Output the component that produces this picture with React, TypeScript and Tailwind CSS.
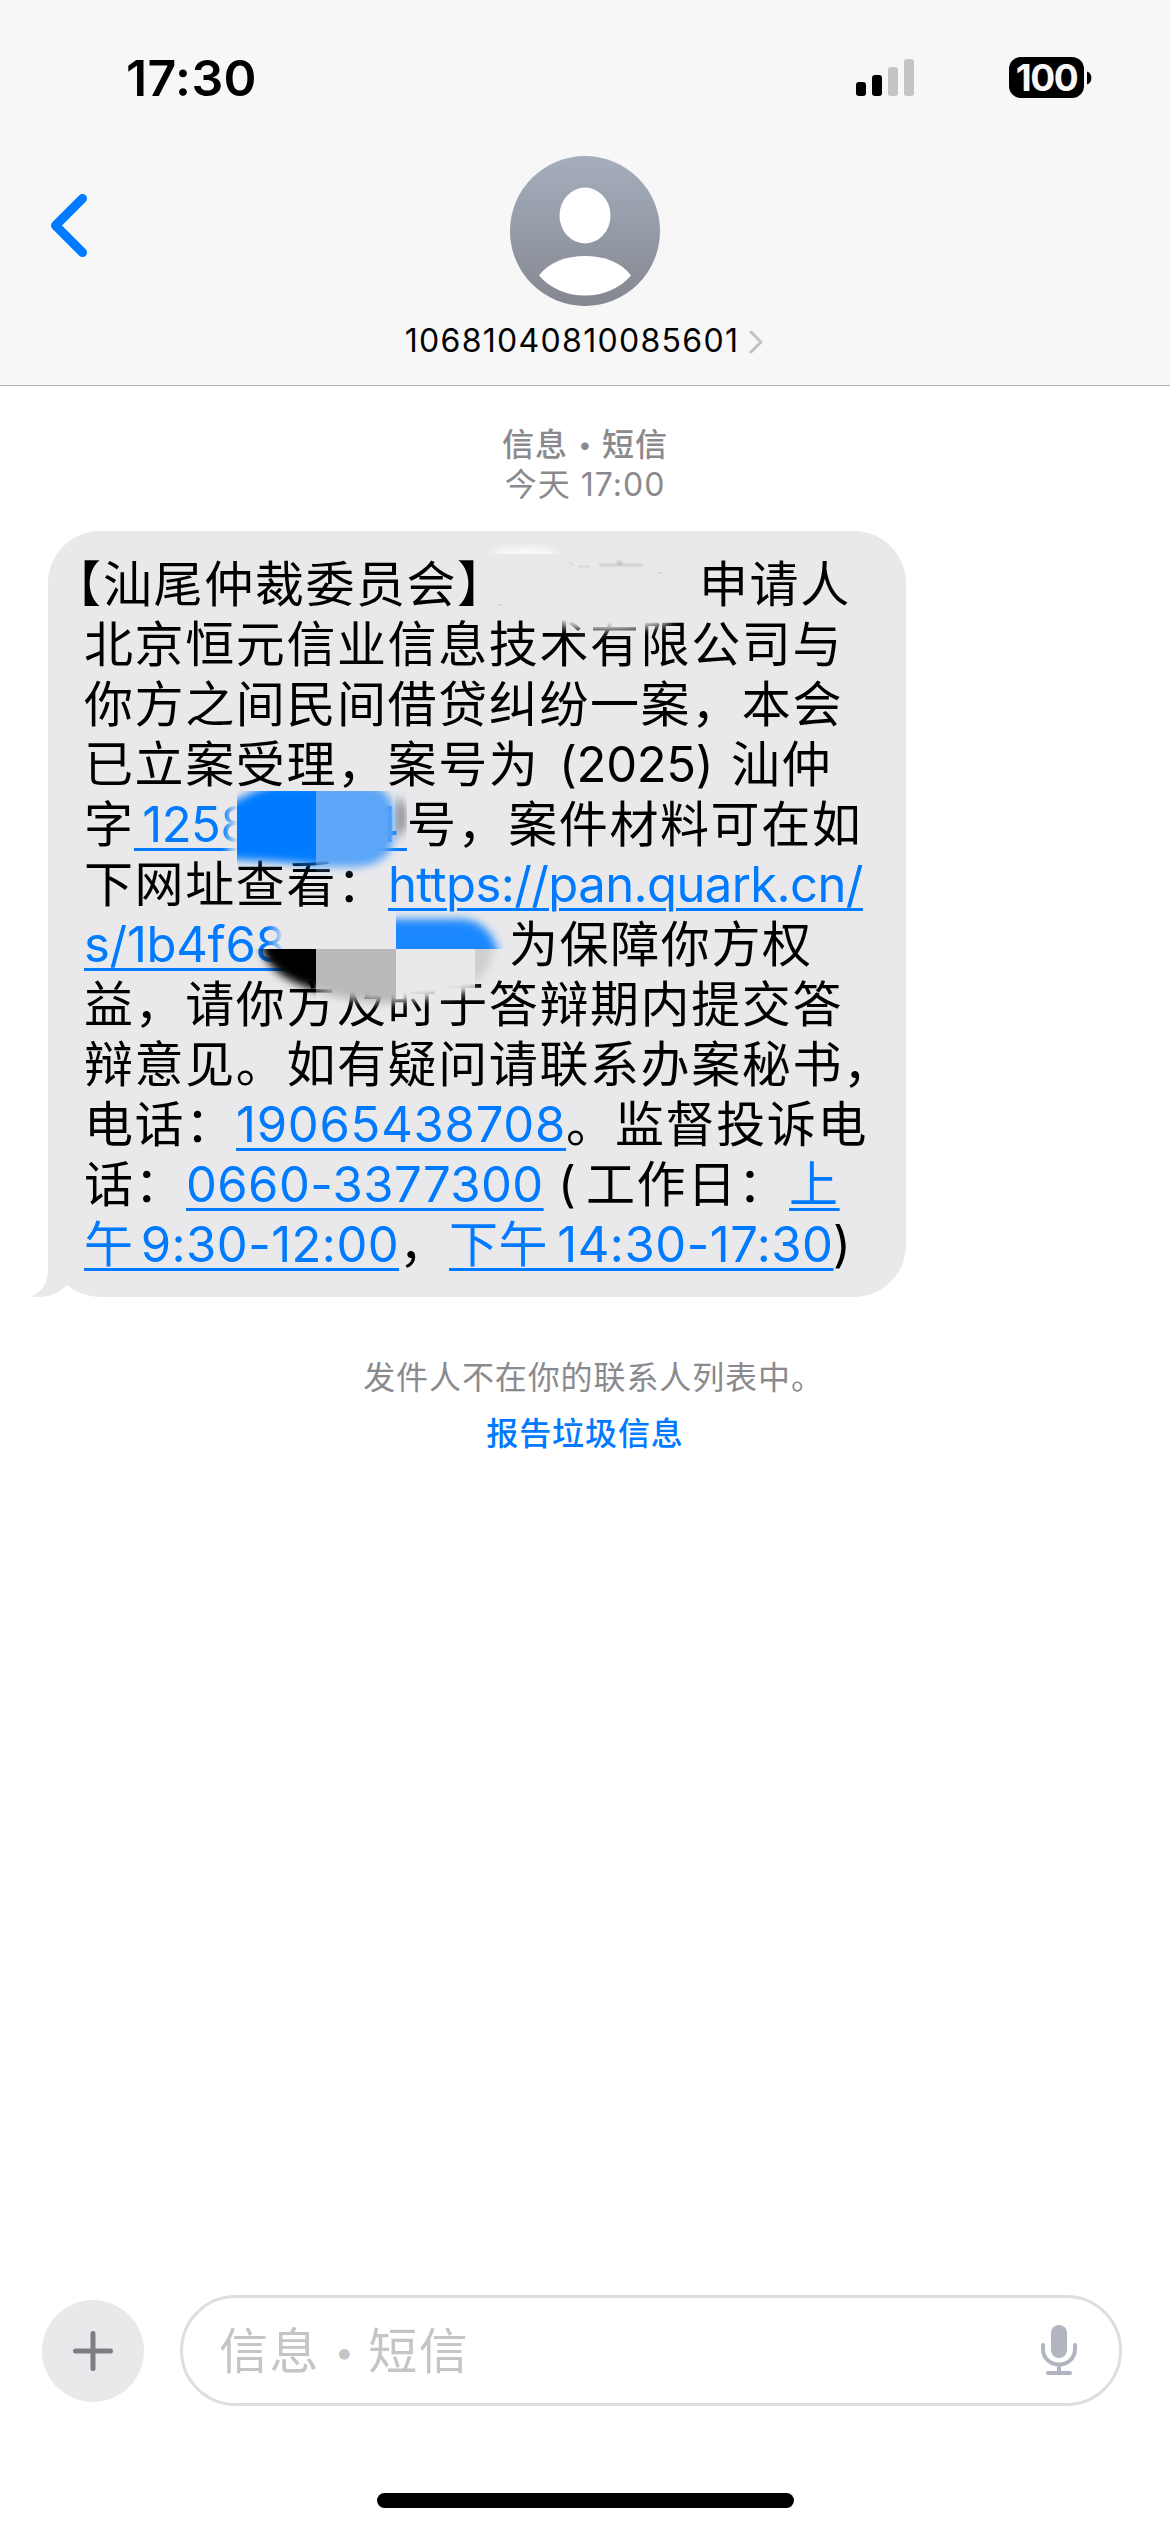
import type { ReactNode } from "react";

/* One row of the message; every run inside has its own advance. */
function Line({ children }: { children: ReactNode }) {
  return <div className="flex h-[60px] whitespace-pre leading-[60px]">{children}</div>;
}

function Cjk({ children, className = "" }: { children: ReactNode; className?: string }) {
  return <span className={`shrink-0 tracking-[1.6px] ${className}`}>{children}</span>;
}

function Link({ children, className = "" }: { children: ReactNode; className?: string }) {
  return (
    <a
      className={`shrink-0 text-[#007aff] underline decoration-[3px] underline-offset-[6px] ${className}`}
    >
      {children}
    </a>
  );
}

function StatusBar() {
  return (
    <div className="flex h-[156px] items-start justify-between pl-[126px] pr-[78px] pt-[47px]">
      <div className="text-[50px] font-semibold leading-[62px] tracking-[0.4px] text-black">17:30</div>
      <div className="flex items-start pt-[10px]">
        <svg className="mr-[95px] mt-[2px]" width="58" height="37" viewBox="0 0 58 37">
          <rect x="0" y="23" width="10" height="14" rx="3" fill="#000" />
          <rect x="16" y="16" width="10" height="21" rx="3" fill="#000" />
          <rect x="32" y="8" width="10" height="29" rx="3" fill="#c5c5c5" />
          <rect x="48" y="0" width="10" height="37" rx="3" fill="#c5c5c5" />
        </svg>
        <div className="flex h-[41px] w-[75px] items-center justify-center rounded-[12px] bg-black text-[37px] font-bold leading-[41px] tracking-[-1.500px] text-[#f7f7f7]">
          100
        </div>
        <svg className="ml-[3px] mt-[14px]" width="5" height="14" viewBox="0 0 5 14">
          <path d="M0 0.5C3 1.5 4.4 4 4.4 7S3 12.500 0 13.500Z" fill="#000" />
        </svg>
      </div>
    </div>
  );
}

function Header() {
  return (
    <header className="h-[386px] border-b border-[#b2b2b2] bg-[#f7f7f7]">
      <StatusBar />
      <div className="grid grid-cols-[1fr_auto_1fr]">
        <svg className="ml-[50px] mt-[37px]" width="38" height="66" viewBox="0 0 38 66">
          <path d="M32.500 5.500L5.500 32.500L32.500 59.500" fill="none" stroke="#007aff" strokeWidth="9" strokeLinecap="round" strokeLinejoin="round" />
        </svg>
        <svg width="150" height="150" viewBox="0 0 150 150">
          <defs>
            <linearGradient id="avatar" x1="0" y1="0" x2="0" y2="1">
              <stop offset="0" stopColor="#a6aebd" />
              <stop offset="1" stopColor="#838790" />
            </linearGradient>
          </defs>
          <circle cx="75" cy="75" r="75" fill="url(#avatar)" />
          <ellipse cx="75" cy="59.500" rx="25.500" ry="28" fill="#fff" />
          <path d="M29 119.500C39 106 56 100 75 100S111 106 121 119.500C110 132 94 139.500 75 139.500S40 132 29 119.500Z" fill="#fff" />
        </svg>
        <div />
      </div>
      <div className="flex items-center justify-center pt-[15px]">
        <span className="ml-[-1px] text-[32px] leading-[40px] tracking-[1.300px] text-black">10681040810085601</span>
        <svg className="ml-[9px] mt-[2px]" width="16" height="24" viewBox="0 0 16 24">
          <path d="M3 2L13 12L3 22" fill="none" stroke="#c2c2c4" strokeWidth="3" strokeLinecap="round" strokeLinejoin="round" />
        </svg>
      </div>
    </header>
  );
}

/* Brush strokes that hide the private parts of the message. */
function Redaction() {
  return (
    <svg className="absolute left-0 top-0" width="858" height="766" viewBox="48 531 858 766">
      <defs>
        <filter id="soft" x="-30%" y="-30%" width="160%" height="160%">
          <feGaussianBlur stdDeviation="4.500" />
        </filter>
        <filter id="faint" x="-30%" y="-30%" width="160%" height="160%">
          <feGaussianBlur stdDeviation="0.800" />
        </filter>
        <linearGradient id="fade" x1="0" y1="0" x2="1" y2="0">
          <stop offset="0" stopColor="#e9e9eb" stopOpacity="0" />
          <stop offset="1" stopColor="#e9e9eb" />
        </linearGradient>
        <clipPath id="c1"><rect x="237" y="791" width="79" height="90" /></clipPath>
        <clipPath id="c2"><rect x="316" y="791" width="100" height="90" /></clipPath>
        <clipPath id="c3"><rect x="396" y="900" width="120" height="49" /></clipPath>
        <clipPath id="c4"><rect x="240" y="949" width="76" height="60" /></clipPath>
        <clipPath id="c5"><rect x="316" y="949" width="80" height="80" /></clipPath>
        <clipPath id="c6"><rect x="396" y="949" width="79" height="80" /></clipPath>
        <clipPath id="c7"><rect x="475" y="949" width="60" height="50" /></clipPath>
        <clipPath id="c8"><rect x="480" y="540" width="100" height="14" /></clipPath>
      </defs>

      <path d="M545 600H670V623C640 631 590 633 560 625Z" fill="#e9e9eb" filter="url(#soft)" />
      <g clipPath="url(#c8)">
        <ellipse cx="525" cy="556" rx="32" ry="7" fill="#fff" filter="url(#soft)" />
      </g>
      <path d="M599 564H642V566H599ZM617 561H622V564H617Z" fill="#c4c4c6" filter="url(#faint)" />
      <path d="M569 562L573 565M578 566.500H590M498 605H503M657 573H662" fill="none" stroke="#dadadc" strokeWidth="2" />

      <rect x="222" y="795" width="16" height="58" fill="url(#fade)" />
      <g clipPath="url(#c1)">
        <path d="M225 806C240 799 252 790 275 785H340V868C300 862 260 861 225 859Z" fill="#007aff" filter="url(#soft)" />
      </g>
      <g clipPath="url(#c2)">
        <path d="M290 785H372C386 789 394 800 394 815V838C392 853 382 866 354 867H290Z" fill="#5ba5f7" filter="url(#soft)" />
      </g>
      <path d="M398 796C406 802 408 830 398 838Z" fill="#44484e" opacity="0.800" filter="url(#soft)" />

      <rect x="266" y="918" width="20" height="50" fill="url(#fade)" />
      <path d="M286 918H396V949H282Z" fill="#e9e9eb" filter="url(#soft)" />
      <g clipPath="url(#c3)">
        <path d="M370 919H460C480 919 496 933 500 960H370Z" fill="#1e88ff" filter="url(#soft)" />
      </g>
      <g clipPath="url(#c4)">
        <path d="M261 925H340V996C300 988 270 975 262 950Z" fill="#000" filter="url(#soft)" />
        <path d="M280 935H330V982C305 978 288 968 280 952Z" fill="#000" />
      </g>
      <g clipPath="url(#c5)">
        <path d="M290 930H420V1002C380 1005 340 1000 316 990H290Z" fill="#b9b9bb" filter="url(#soft)" />
      </g>
      <g clipPath="url(#c6)">
        <path d="M370 930H500V986C460 992 440 1000 370 1003Z" fill="#e9e9eb" filter="url(#soft)" />
      </g>
      <g clipPath="url(#c7)">
        <path d="M440 935H494C494 960 486 978 470 984H440Z" fill="#cfcfd1" filter="url(#soft)" />
      </g>
    </svg>
  );
}

function Message() {
  return (
    <div className="relative ml-[48px] mt-[26px] h-[766px] w-[858px] rounded-[52px] rounded-bl-none bg-[#e9e9eb] pl-[36px] pt-[24px] text-[49px] text-black">
      <svg className="absolute bottom-0 left-[-18px]" width="72" height="60" viewBox="0 0 72 60">
        <path d="M37 48C46 56 58 60 72 60H37Z" fill="#fff" />
        <path d="M1 59.500C15 61.500 28 57 37 48V60H1Z" fill="#fff" />
        <path d="M18 20V33C18 46 12 55 1 59.500C15 61.500 28 57 37 48Z" fill="#e9e9eb" />
      </svg>
      <div className="relative">
        <Line>
          <Cjk className="ml-[-32px] w-[51px]">【</Cjk>
          <Cjk className="w-[354px]">汕尾仲裁委员会</Cjk>
          <Cjk className="w-[242px]">】</Cjk>
          <Cjk>申请人</Cjk>
        </Line>
        <Line><Cjk>北京恒元信业信息技术有限公司与</Cjk></Line>
        <Line><Cjk>你方之间民间借贷纠纷一案，本会</Cjk></Line>
        <Line>
          <Cjk className="w-[473px]">已立案受理，案号为</Cjk>
          <span className="w-[174px] shrink-0 pl-[2px] tracking-[-0.300px]">(2025)</span>
          <Cjk>汕仲</Cjk>
        </Line>
        <Line>
          <Cjk className="w-[50px]">字</Cjk>
          <Link className="w-[180px] tracking-[-0.500px] [word-spacing:-5px]"> 1258</Link>
          <Link className="w-[93px] text-right tracking-[-0.500px] [word-spacing:-5px]">  4 </Link>
          <Cjk>号，案件材料可在如</Cjk>
        </Line>
        <Line>
          <Cjk className="w-[304px]">下网址查看：</Cjk>
          <Link className="tracking-[-0.600px]">https://pan.quark.cn/</Link>
        </Line>
        <Line>
          <Link className="w-[425px] tracking-[-0.300px]">s/1b4f68</Link>
          <Cjk>为保障你方权</Cjk>
        </Line>
        <Line><Cjk>益，请你方及时于答辩期内提交答</Cjk></Line>
        <Line><Cjk>辩意见。如有疑问请联系办案秘书，</Cjk></Line>
        <Line>
          <Cjk className="w-[152px]">电话：</Cjk>
          <Link className="w-[330px] tracking-[0.750px]">19065438708</Link>
          <Cjk className="w-[49px]">。</Cjk>
          <Cjk>监督投诉电</Cjk>
        </Line>
        <Line>
          <Cjk className="w-[102px]">话：</Cjk>
          <Link className="w-[357px] tracking-[0.400px]">0660-3377300</Link>
          <span className="w-[43px] shrink-0 pl-[15px]">(</span>
          <Cjk className="w-[203px]">工作日：</Cjk>
          <Link className="tracking-[1.600px] underline-offset-[4px]">上</Link>
        </Line>
        <Line>
          <Link className="w-[315px] tracking-[0.450px] [word-spacing:-7px]">午 9:30-12:00</Link>
          <Cjk className="w-[50px]">，</Cjk>
          <Link className="w-[384px] tracking-[0.500px] [word-spacing:-5px]">下午 14:30-17:30</Link>
          <span>)</span>
        </Line>
      </div>
      <Redaction />
    </div>
  );
}

function Composer() {
  return (
    <div className="flex items-center pl-[42px]">
      <div className="flex size-[102px] items-center justify-center rounded-full bg-[#e8e9eb]">
        <svg width="40" height="40" viewBox="0 0 40 40">
          <path d="M20 2.500V37.500M2.500 20H37.500" stroke="#7d7d83" strokeWidth="5" strokeLinecap="round" />
        </svg>
      </div>
      <div className="ml-[36px] flex h-[111px] w-[942px] items-center justify-between rounded-full border-[3px] border-[#dedede] pl-[36px] pr-[42px]">
        <div className="flex items-center pt-[2px] text-[49px] leading-[60px] tracking-[1.600px] text-[#c5c5c7]">
          <span>信息</span>
          <span className="w-[48px] text-center text-[34px] tracking-normal">•</span>
          <span>短信</span>
        </div>
        <svg width="36" height="51" viewBox="0 0 36 51">
          <rect x="10" y="0" width="16" height="33" rx="8" fill="#b0b5bf" />
          <path d="M2 20V24C2 33 9 39.500 18 39.500S34 33 34 24V20M18 40V47M7 48H29" fill="none" stroke="#b0b5bf" strokeWidth="4" strokeLinecap="round" />
        </svg>
      </div>
    </div>
  );
}

export default function App() {
  return (
    <div className="flex h-[2532px] w-[1170px] flex-col overflow-hidden bg-white font-['Inter','Noto_Sans_CJK_SC',sans-serif]">
      <Header />
      <main className="flex-1">
        <div className="pt-[39px] text-center text-[32px] leading-[40px] tracking-[1px] text-[#8a8a8e]">
          <div className="flex items-center justify-center font-medium">
            <span>信息</span>
            <span className="w-[34px] text-center text-[24px] tracking-normal">•</span>
            <span>短信</span>
          </div>
          <div>今天 17:00</div>
        </div>
        <Message />
        <div className="pt-[57px] text-center text-[32px] tracking-[0.900px]">
          <div className="pl-[17px] leading-[48px] text-[#8a8a8e]">发件人不在你的联系人列表中。</div>
          <div className="mt-[8px] font-medium leading-[48px] text-[#007aff]">报告垃圾信息</div>
        </div>
      </main>
      <footer className="flex h-[237px] flex-col">
        <Composer />
        <div className="mx-auto mt-[87px] h-[15px] w-[417px] rounded-full bg-black" />
      </footer>
    </div>
  );
}
